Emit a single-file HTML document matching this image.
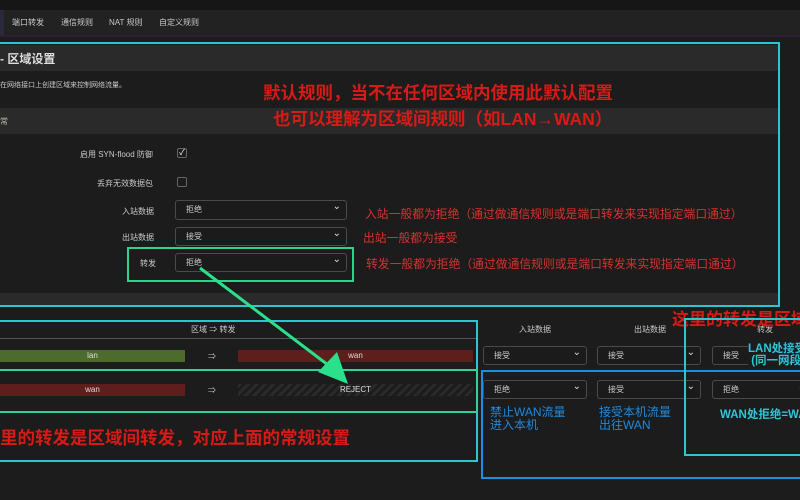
<!DOCTYPE html>
<html><head><meta charset="utf-8"><style>
*{margin:0;padding:0;box-sizing:border-box}
body{width:800px;height:500px;background:#1c1c1c;position:relative;overflow:hidden;font-family:"Liberation Sans","Noto Sans CJK SC",sans-serif;color:#ccc}
.a{position:absolute}
.t{font-size:8px;color:#c8c8c8;white-space:nowrap}
.sel{position:absolute;border:1px solid #4a4a4a;border-radius:3px;background:#1b1b1b;font-size:8px;color:#ccc;padding-left:10px;line-height:17px}
.sel:after{content:"⌄";position:absolute;right:5px;top:-3px;font-size:10px;color:#ddd}
.red{color:#d81a16;font-weight:bold;white-space:nowrap}
.rs{color:#d8312c;font-size:11.8px;white-space:nowrap}
.blue{color:#1c8ae0;font-size:12px;line-height:13px;white-space:nowrap}
.cy{color:#2ec6d8;font-weight:bold;font-size:11.5px;white-space:nowrap}
</style></head><body>
<div class="a" style="left:0;top:0;width:800px;height:10px;background:#161616"></div>
<div class="a" style="left:0;top:10px;width:800px;height:25px;background:#222"></div>
<div class="a" style="left:0;top:10px;width:4px;height:25px;background:#2a2a3a"></div>
<div class="a" style="left:0;top:35px;width:800px;height:2px;background:#2a2232"></div>
<div class="a t" style="left:12px;top:17px">端口转发</div>
<div class="a t" style="left:61px;top:17px">通信规则</div>
<div class="a t" style="left:109px;top:17px">NAT 规则</div>
<div class="a t" style="left:159px;top:17px">自定义规则</div>

<div class="a" style="left:0;top:45px;width:780px;height:26px;background:#2a2a2a"></div>
<div class="a" style="left:0;top:50px;font-size:12px;font-weight:bold;color:#ddd">- 区域设置</div>
<div class="a t" style="left:0;top:80px;font-size:7px">在网络接口上创建区域来控制网络流量。</div>
<div class="a" style="left:0;top:108px;width:780px;height:26px;background:#2a2a2a"></div>
<div class="a t" style="left:0;top:116px;color:#bba">常</div>
<div class="a" style="left:0;top:293px;width:780px;height:13px;background:#2a2a2a"></div>

<div class="a t" style="left:80px;top:149px">启用 SYN-flood 防御</div>
<div class="a" style="left:177px;top:148px;width:10px;height:10px;border:1px solid #666;border-radius:2px;font-size:8px;line-height:8px;text-align:center;color:#fff">✓</div>
<div class="a t" style="left:97px;top:178px">丢弃无效数据包</div>
<div class="a" style="left:177px;top:177px;width:10px;height:10px;border:1px solid #666;border-radius:2px"></div>
<div class="a t" style="left:122px;top:206px">入站数据</div>
<div class="sel" style="left:175px;top:200px;width:172px;height:20px">拒绝</div>
<div class="a t" style="left:122px;top:232px">出站数据</div>
<div class="sel" style="left:175px;top:227px;width:172px;height:19px">接受</div>
<div class="a t" style="left:140px;top:258px">转发</div>
<div class="sel" style="left:175px;top:253px;width:172px;height:19px">拒绝</div>
<div class="a" style="left:127px;top:247px;width:227px;height:35px;border:2px solid #2ed38a"></div>

<div class="a rs" style="left:365px;top:205px">入站一般都为拒绝（通过做通信规则或是端口转发来实现指定端口通过）</div>
<div class="a rs" style="left:363px;top:229px">出站一般都为接受</div>
<div class="a rs" style="left:366px;top:255px">转发一般都为拒绝（通过做通信规则或是端口转发来实现指定端口通过）</div>
<div class="a red" style="left:263px;top:80px;font-size:17.5px">默认规则，当不在任何区域内使用此默认配置</div>
<div class="a red" style="left:273px;top:106px;font-size:17.5px">也可以理解为区域间规则（如LAN→WAN）</div>

<div class="a" style="left:-2px;top:42px;width:782px;height:265px;border:2px solid #2cc6d2"></div>

<div class="a t" style="left:191px;top:324px">区域 ⇒ 转发</div>
<div class="a" style="left:0;top:338px;width:478px;height:1px;background:#555"></div>
<div class="a t" style="left:519px;top:324px">入站数据</div>
<div class="a t" style="left:634px;top:324px">出站数据</div>
<div class="a t" style="left:757px;top:324px">转发</div>
<div class="a" style="left:0;top:350px;width:185px;height:12px;background:#4e6b2e;font-size:8px;text-align:center;line-height:12px;color:#ddd">lan</div>
<div class="a t" style="left:208px;top:351px">⇒</div>
<div class="a" style="left:238px;top:350px;width:235px;height:12px;background:#5e1f1c;font-size:8px;text-align:center;line-height:12px;color:#ddd">wan</div>
<div class="a" style="left:0;top:384px;width:185px;height:12px;background:#5e1f1c;font-size:8px;text-align:center;line-height:12px;color:#ddd">wan</div>
<div class="a t" style="left:208px;top:385px">⇒</div>
<div class="a" style="left:238px;top:384px;width:235px;height:12px;background:repeating-linear-gradient(135deg,#2a2a2a 0 3px,#1c1c1c 3px 6px);font-size:8px;text-align:center;line-height:12px;color:#ddd">REJECT</div>
<div class="a red" style="left:0;top:425px;font-size:17.5px">里的转发是区域间转发，对应上面的常规设置</div>

<div class="sel" style="left:483px;top:346px;width:104px;height:19px">接受</div>
<div class="sel" style="left:597px;top:346px;width:104px;height:19px">接受</div>
<div class="sel" style="left:712px;top:346px;width:100px;height:19px">接受</div>
<div class="sel" style="left:483px;top:380px;width:104px;height:19px">拒绝</div>
<div class="sel" style="left:597px;top:380px;width:104px;height:19px">接受</div>
<div class="sel" style="left:712px;top:380px;width:100px;height:19px">拒绝</div>

<div class="a blue" style="left:490px;top:406px">禁止WAN流量<br>进入本机</div>
<div class="a blue" style="left:599px;top:406px">接受本机流量<br>出往WAN</div>
<div class="a cy" style="left:748px;top:343px;line-height:12px;background:#1c1c1c">LAN处接受<br>&nbsp;(同一网段</div>
<div class="a cy" style="left:720px;top:406px">WAN处拒绝=WAN</div>
<div class="a red" style="left:672px;top:305px;font-size:17px">这里的转发是区域</div>

<div class="a" style="left:-2px;top:320px;width:480px;height:142px;border:2px solid #2cc6d2"></div>
<div class="a" style="left:-2px;top:369px;width:480px;height:44px;border:2px solid #2ed39a"></div>
<div class="a" style="left:481px;top:370px;width:330px;height:109px;border:2px solid #1a8fe0"></div>
<div class="a" style="left:684px;top:318px;width:130px;height:138px;border:2px solid #2cc6d2"></div>

<svg class="a" style="left:0;top:0" width="800" height="500">
<line x1="200" y1="268" x2="332" y2="368" stroke="#2be08a" stroke-width="3"/>
<polygon points="348,384 318,372 337,352" fill="#2be08a"/>
</svg>
</body></html>
